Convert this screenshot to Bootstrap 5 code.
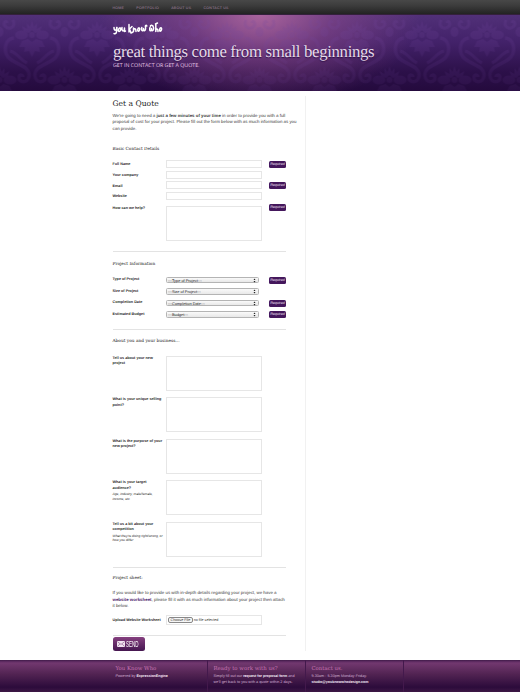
<!DOCTYPE html>
<html lang="en">
<head>
<meta charset="utf-8">
<meta name="viewport" content="width=device-width, initial-scale=1">
<title>Get a Quote - You Know Who</title>
<link href="https://cdn.jsdelivr.net/npm/bootstrap@5.3.0/dist/css/bootstrap.min.css" rel="stylesheet">
<style>
html,body{height:692px;overflow:hidden}
body{font:4.4px/6.4px "Liberation Sans",Arial,sans-serif;color:#3a3a3a;background:#fff;text-rendering:geometricPrecision}
h1,h2,h3,p{margin:0;font-weight:400;white-space:nowrap}
h1,h2,h3{font-family:"DejaVu Serif","Liberation Serif",serif}
.topbar{height:15px;padding-left:112.5px;background:linear-gradient(#484848,#3c3c3c 40%,#232323);border-bottom:1px solid #34203c}
.topbar a{font-size:3.6px;line-height:16px;letter-spacing:.22px;color:#a586a2;padding:0;margin-right:12.2px}
.hero{height:76px;padding-left:113px;background:radial-gradient(ellipse 160px 92px at 260px 0,rgba(190,112,165,.8),rgba(150,80,145,.5) 45%,rgba(100,50,120,0)),linear-gradient(#513078,#43226a 35%,#2c1049 75%,#240a3d)}
.damask{position:absolute;inset:0;width:100%;height:100%}
.logo{display:block;margin-top:7px}
.hero h1{font:16.8px/20px "Liberation Serif",serif;letter-spacing:-.34px;color:#e6dbe9;margin-top:6px;text-shadow:0 1px 1px #2d1145}
.hero .tag{font:5.25px/6px "Open Sans",sans-serif;color:#eccbea;margin-top:-.5px}
.main{width:193.5px;height:555px;margin-left:112.5px;margin-top:5px;border-right:1px solid #f1f1f1}
.main h2{font-size:7.6px;line-height:10px;color:#1c1c1c;padding-top:2.5px}
.main h3{font-size:4.3px;line-height:6px;color:#222}
.intro{margin-top:4.2px!important}
.rule{width:173.5px;height:1px;background:#e3e3e3}
.line-row{display:grid;grid-template-columns:53.5px 96px 17px}
.line-row>.req{margin-left:7px}
.lab{font-size:3.76px;line-height:5.5px;font-weight:700;color:#2a2a2a;white-space:nowrap}
.lab em{display:block;font-weight:400;font-size:3.35px;line-height:4.7px;margin-top:1.2px}
.box{border:1px solid #e6e6e6;background:#fff;border-radius:0;padding:0;width:96px;height:8px;min-height:0;display:block;resize:none}
textarea.box{height:35px}
.req{width:17px;height:7px;border-radius:1.5px;background:#44175c;color:#efe2f3;font-size:3.6px;line-height:7.4px;text-align:center;font-style:italic}
.pick{width:92.5px;height:6.4px;border:.8px solid #b4b4b4;border-radius:1.5px;background:linear-gradient(#fafafa,#e8e8e8);font-size:3.9px;line-height:5.6px;color:#222;padding:0 2px 0 1px}
.send{width:32px;height:14px;border:0;border-radius:2.5px;background:linear-gradient(#85407f,#451650);color:#fff;font:8.4px/14px "Liberation Sans",sans-serif;padding:0 0 0 4.5px}
.send svg{flex:none;margin-right:1px}
.send span{flex:none;transform:scaleX(.54);transform-origin:0 50%}
.foot{height:32px;margin-top:9px;padding-left:110px;background:linear-gradient(#3f1a48,#5c2a60 1.5px,#72386f 3px,#512352 45%,#2c0b3b 85%,#3d1745);color:#d1add1}
.foot>div{width:98px;border-right:1px solid #43194c;padding:6.2px 0 0 5.5px;height:32px;white-space:nowrap;line-height:5.7px;font-size:3.78px}
.foot h3{font-size:5.4px;line-height:7px;color:#c774b3;margin-bottom:1px}
.foot b{color:#f3e8f4;font-size:3.6px}
.opening{height:50px}
.contact{height:106px;padding-top:.8px}
.contact h3{height:13.2px}
.contact .line-row{height:10.75px}
.contact .lab{padding-top:2.2px}
.contact .req{margin-top:.8px}
.contact .area{height:48.5px;padding-top:3px}
.contact .area .lab{padding-top:0}
.contact .area .req{margin-top:-1.5px}
.contact .rule{margin-top:0}
.project{height:84px;padding-top:10px}
.project h3{height:14.7px}
.project .line-row{height:11.6px}
.project .lab{padding-top:.6px}
.project .rule{margin-top:5.6px}
.about{padding-top:3.3px;height:231.5px}
.about h3{height:16.7px}
.about .line-row{height:41.4px}
.about .rule{margin-top:4.4px}
.sheet{padding-top:8.7px}
.sheet-text{margin-top:8px;margin-bottom:5.8px}
.sheet-link{color:#4b1b6b}
.file{height:10px;font-size:3.7px;padding-left:1px;color:#333}
.choose{border:.8px solid #888;border-radius:2px;line-height:4.4px;padding:0 1.5px;margin-right:1px;background:#f6f6f6}
.sheet .lab{padding-top:2.5px}
.sheet .rule{margin:10px 0 1px}
.sheet .line-row{height:10px}
</style>
</head>
<body>
<nav class="topbar d-flex">
<a class="nav-link" href="#">HOME</a><a class="nav-link" href="#">PORTFOLIO</a><a class="nav-link" href="#">ABOUT US</a><a class="nav-link" href="#">CONTACT US</a>
</nav>
<header class="hero position-relative overflow-hidden">
<svg class="damask" aria-hidden="true">
<defs>
<g id="flower"><path d="M0-14 2-8 5-12 5-6 10-9 8-3 3-2 0-5-3-2-8-3-10-9-5-6-5-12-2-8Z"/><ellipse cx="-10.5" cy="0" rx="6.5" ry="4.5"/><ellipse cx="10.5" cy="0" rx="6.5" ry="4.5"/><circle r="3"/><path d="M0 22-3 16-8 17-7 12-13 12-10 6-4 4 0 7 4 4 10 6 13 12 7 12 8 17 3 16Z"/></g>
<g id="scroll" fill="none" stroke="#74489f"><path d="M18 3C27 4 29 15 24 22 17 30 2 30 3 41 4 49 14 48 13 42 12 39 9 40 9 42" stroke-width="3.5"/><path d="M19-15C16-8 22-5 26-8 30-11 26-16 25-12M22 16C14 18 12 25 5 28" stroke-width="3"/></g>
<pattern id="damask" x="-.5" y="0" width="65" height="90" patternUnits="userSpaceOnUse">
<g fill="#74489f" transform="translate(32.5 20)"><use href="#flower"/><use href="#scroll"/><use href="#scroll" transform="scale(-1 1)"/></g>
<g fill="#74489f"><use href="#flower" transform="translate(0 65)"/><use href="#flower" transform="translate(65 65)"/><ellipse cx="0" cy="17" rx="4" ry="5"/><ellipse cx="65" cy="17" rx="4" ry="5"/></g>
</pattern>
<linearGradient id="fade" x2="0" y2="1"><stop stop-color="#fff"/><stop offset="1" stop-color="#777"/></linearGradient>
<mask id="fading"><rect width="520" height="76" fill="url(#fade)"/></mask>
</defs>
<rect width="520" height="76" fill="url(#damask)" opacity=".2" mask="url(#fading)"/>
</svg>
<div class="position-relative">
<svg class="logo" width="50" height="14" viewBox="0 0 50 14" fill="none" stroke="#fff" stroke-width="1.500" stroke-linecap="round" stroke-linejoin="round" role="img" aria-label="you know who"><path d="M1 5.500C1 9 3.700 9 3.700 5.500M4 5.500C4 10 3 12.500 1 11.500M6.500 6C4.500 8 5.500 10.500 7 9 8.500 7 7.500 5.500 6.500 6M9 5.500C8.500 10 11.500 10 11.500 6V9.500L12.500 9M16 2.500V10M16.500 7 19 4.500M16.500 7 18 11 20 10M20.500 6V9.500C20.500 6 23 5.500 23 9.500M25.500 6C24 8 25 10 26 9 27.500 7 26.500 5.500 25.500 6M28.800 5.500C28 9.500 30.500 10 30.500 6.500 30.500 10 33 9 32.500 5 32 3 33.500 3 33.800 4M37 5.500C36 9.500 38.500 10 38.500 6.500 38.500 10 41 9 40.500 5.500 40 2.500 37 3 37.500 4.200M42.800 2.500V9.500C42.800 6 45 6 45 9.500M42.500 2 44.500 1M47.300 6C46 7.500 46.500 10 47.800 9 49.500 6.500 48 5 47.300 6"/></svg>
<h1>great things come from small beginnings</h1>
<p class="tag">GET IN CONTACT OR GET A QUOTE.</p>
</div>
</header>
<main class="main">
<section class="opening"><h2>Get a Quote</h2>
<p class="intro">We're going to need a <b>just a few minutes of your time</b> in order to provide you with a full<br>proposal of cost for your project. Please fill out the form below with as much information as you<br>can provide.</p></section>
<form>
<section class="contact">
<h3>Basic Contact Details</h3>
<div class="line-row"><label class="lab">Full Name</label><input class="box"><span class="req">Required</span></div>
<div class="line-row"><label class="lab">Your company</label><input class="box"></div>
<div class="line-row"><label class="lab">Email</label><input class="box"><span class="req">Required</span></div>
<div class="line-row"><label class="lab">Website</label><input class="box"></div>
<div class="line-row area"><label class="lab">How can we help?</label><textarea class="box"></textarea><span class="req">Required</span></div>
<div class="rule"></div>
</section>
<section class="project">
<h3>Project Information</h3>
<div class="line-row"><label class="lab">Type of Project</label><div class="pick d-flex justify-content-between"><span>---Type of Project---</span><svg width="3" height="5" viewBox="0 0 3 5"><path d="M.5 2 1.500.5 2.500 2ZM.5 3 1.500 4.500 2.500 3Z" fill="#222"/></svg></div><span class="req">Required</span></div>
<div class="line-row"><label class="lab">Size of Project</label><div class="pick d-flex justify-content-between"><span>---Size of Project---</span><svg width="3" height="5" viewBox="0 0 3 5"><path d="M.5 2 1.500.5 2.500 2ZM.5 3 1.500 4.500 2.500 3Z" fill="#222"/></svg></div></div>
<div class="line-row"><label class="lab">Completion Date</label><div class="pick d-flex justify-content-between"><span>---Completion Date---</span><svg width="3" height="5" viewBox="0 0 3 5"><path d="M.5 2 1.500.5 2.500 2ZM.5 3 1.500 4.500 2.500 3Z" fill="#222"/></svg></div><span class="req">Required</span></div>
<div class="line-row"><label class="lab">Estimated Budget</label><div class="pick d-flex justify-content-between"><span>---Budget---</span><svg width="3" height="5" viewBox="0 0 3 5"><path d="M.5 2 1.500.5 2.500 2ZM.5 3 1.500 4.500 2.500 3Z" fill="#222"/></svg></div><span class="req">Required</span></div>
<div class="rule"></div>
</section>
<section class="about">
<h3>About you and your business...</h3>
<div class="line-row"><label class="lab">Tell us about your new<br>project</label><textarea class="box"></textarea></div>
<div class="line-row"><label class="lab">What is your unique selling<br>point?</label><textarea class="box"></textarea></div>
<div class="line-row"><label class="lab">What is the purpose of your<br>new project?</label><textarea class="box"></textarea></div>
<div class="line-row"><label class="lab">What is your target<br>audience?<em>Age, industry, male/female,<br>income, etc.</em></label><textarea class="box"></textarea></div>
<div class="line-row"><label class="lab">Tell us a bit about your<br>competition<em>What they're doing right/wrong, or<br>how you differ</em></label><textarea class="box"></textarea></div>
<div class="rule"></div>
</section>
<section class="sheet">
<h3>Project sheet:</h3>
<p class="sheet-text">If you would like to provide us with in-depth details regarding your project, we have a<br><b class="sheet-link">website worksheet</b>, please fill it with as much information about your project then attach<br>it below.</p>
<div class="line-row"><label class="lab">Upload Website Worksheet</label><div class="box file d-flex align-items-center"><span class="choose">Choose File</span><span>no file selected</span></div></div>
<div class="rule"></div>
<button type="button" class="send d-flex align-items-center"><svg width="8" height="6" viewBox="0 0 8 6"><rect width="8" height="6" rx=".5" fill="#f1e4f1"/><path d="M.5.8 4 3.400 7.500.8M.5 5.500 2.800 3M7.500 5.500 5.200 3" fill="none" stroke="#7b4679" stroke-width=".6"/></svg><span>SEND</span></button>
</section>
</form>
</main>
<footer class="foot d-flex">
<div><h3>You Know Who</h3>Powered by <b>ExpressionEngine</b></div>
<div><h3>Ready to work with us?</h3>Simply fill out our <b>request for proposal form</b> and<br>we'll get back to you with a quote within 2 days.</div>
<div><h3>Contact us.</h3>9.30am - 5.30pm Monday-Friday.<br><b>studio@youknowwhodesign.com</b></div>
</footer>
<script src="https://cdn.jsdelivr.net/npm/bootstrap@5.3.0/dist/js/bootstrap.bundle.min.js"></script>
</body>
</html>
